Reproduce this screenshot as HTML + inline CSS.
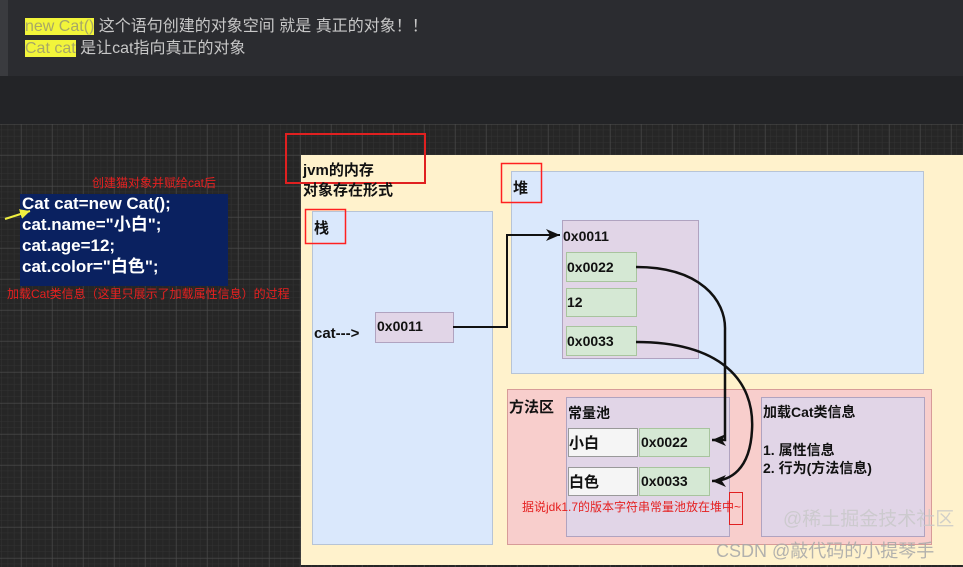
<!DOCTYPE html>
<html><head><meta charset="utf-8"><style>
body{margin:0;width:963px;height:567px;overflow:hidden;background:#232427;font-family:"Liberation Sans","Noto Sans CJK SC",sans-serif}
.top{position:absolute;left:0;top:0;width:963px;height:76px;background:#2b2c30}
.bar{position:absolute;left:0;top:0;width:8px;height:76px;background:#3a3b3f}
.t{position:absolute;left:25px;color:#c8c8c8;font-size:16px;line-height:23px}
.hl{background:#f2f53a;color:#a8a866}
</style></head><body>
<div class="top"><div class="bar"></div>
<div class="t" style="top:15px"><span class="hl">new Cat()</span> 这个语句创建的对象空间 就是 真正的对象！！</div>
<div class="t" style="top:37px"><span class="hl">Cat cat</span> 是让cat指向真正的对象</div>
</div>
<svg style="position:absolute;left:0;top:0" width="963" height="567" font-family="Liberation Sans, Noto Sans CJK SC, sans-serif">
<defs>
<pattern id="mi" width="6.2" height="6.2" patternUnits="userSpaceOnUse" x="2" y="124"><path d="M6.2 0V6.2M0 6.2H6.2" stroke="#333" stroke-width="1" fill="none"/></pattern>
<pattern id="ma" width="31" height="31" patternUnits="userSpaceOnUse" x="21" y="124"><path d="M0 0V31M0 0H31" stroke="#4e4e4e" stroke-width="1" fill="none"/></pattern>
<marker id="ar" markerUnits="userSpaceOnUse" markerWidth="16" markerHeight="14" refX="14" refY="7" orient="auto"><path d="M0 1L14 7L0 13L4 7Z" fill="#111"/></marker>
<marker id="ay" markerUnits="userSpaceOnUse" markerWidth="12" markerHeight="10" refX="10" refY="5" orient="auto"><path d="M0 0L10 5L0 10Z" fill="#f0f040"/></marker>
</defs>
<rect x="0" y="124" width="963" height="443" fill="#262626"/>
<rect x="0" y="124" width="963" height="443" fill="url(#mi)"/>
<rect x="0" y="124" width="963" height="443" fill="url(#ma)"/>
<rect x="20" y="194" width="208" height="92" fill="#0a2160"/>
<g fill="#fff" font-weight="bold" font-size="17">
<text x="22" y="209">Cat cat=new Cat();</text>
<text x="22" y="230">cat.name="小白";</text>
<text x="22" y="251">cat.age=12;</text>
<text x="22" y="272">cat.color="白色";</text>
</g>
<path d="M5 219L30 211" stroke="#f0f040" stroke-width="2" marker-end="url(#ay)"/>
<text x="92" y="187" font-size="12" fill="#e52020">创建猫对象并赋给cat后</text>
<text x="7" y="298" font-size="12" fill="#e52020">加载Cat类信息（这里只展示了加载属性信息）的过程</text>
<rect x="301" y="155" width="662" height="410" fill="#fff2cc"/>
<rect x="286" y="134" width="139" height="49" fill="none" stroke="#e02020" stroke-width="2"/>
<text x="303" y="175" font-size="15" font-weight="bold" fill="#111">jvm的内存</text>
<text x="303" y="195" font-size="15" font-weight="bold" fill="#111">对象存在形式</text>
<rect x="312.5" y="211.5" width="180" height="333" fill="#dae8fc" stroke="#b7c4d6"/>
<rect x="305.5" y="209.5" width="40" height="34" fill="none" stroke="#ff2020" stroke-width="1.5"/>
<text x="314" y="233" font-size="15" font-weight="bold" fill="#111">栈</text>
<text x="314" y="338" font-size="15" font-weight="bold" fill="#111">cat---&gt;</text>
<rect x="375.5" y="312.5" width="78" height="30" fill="#e1d5e7" stroke="#b0a3c0"/>
<text x="377" y="331" font-size="14" font-weight="bold" fill="#111">0x0011</text>
<rect x="511.5" y="171.5" width="412" height="202" fill="#dae8fc" stroke="#b7c4d6"/>
<rect x="501.5" y="163.5" width="40" height="39" fill="none" stroke="#ff2020" stroke-width="1.5"/>
<text x="513" y="193" font-size="15" font-weight="bold" fill="#111">堆</text>
<rect x="562.5" y="220.5" width="136" height="138" fill="#e1d5e7" stroke="#b0a3c0"/>
<text x="563" y="241" font-size="14" font-weight="bold" fill="#111">0x0011</text>
<g fill="#d5e8d4" stroke="#a8c49e"><rect x="566.5" y="252.5" width="70" height="29"/><rect x="566.5" y="288.5" width="70" height="28"/><rect x="566.5" y="326.5" width="70" height="29"/></g>
<g font-size="14" font-weight="bold" fill="#111"><text x="567" y="272">0x0022</text><text x="567" y="307">12</text><text x="567" y="346">0x0033</text></g>
<path d="M453 327H507V235H560" stroke="#111" stroke-width="2" fill="none" marker-end="url(#ar)"/>
<rect x="507.5" y="389.5" width="424" height="155" fill="#f8cecc" stroke="#d79b98"/>
<text x="509" y="412" font-size="15" font-weight="bold" fill="#111">方法区</text>
<rect x="566.5" y="397.5" width="163" height="139" fill="#e1d5e7" stroke="#b0a3c0"/>
<text x="568" y="418" font-size="14" font-weight="bold" fill="#111">常量池</text>
<rect x="568.5" y="428.5" width="69" height="28" fill="#f5f5f5" stroke="#999"/>
<rect x="639.5" y="428.5" width="70" height="28" fill="#d5e8d4" stroke="#a8c49e"/>
<rect x="568.5" y="467.5" width="69" height="28" fill="#f5f5f5" stroke="#999"/>
<rect x="639.5" y="467.5" width="70" height="28" fill="#d5e8d4" stroke="#a8c49e"/>
<g font-size="15" font-weight="bold" fill="#111"><text x="569" y="448">小白</text><text x="569" y="487">白色</text></g>
<g font-size="14" font-weight="bold" fill="#111"><text x="641" y="447">0x0022</text><text x="641" y="486">0x0033</text></g>
<rect x="761.5" y="397.5" width="163" height="139" fill="#e1d5e7" stroke="#b0a3c0"/>
<g font-size="14" font-weight="bold" fill="#111"><text x="763" y="417">加载Cat类信息</text><text x="763" y="455">1. 属性信息</text><text x="763" y="473">2. 行为(方法信息)</text></g>
<path d="M636 267C700 267 726 300 725 330L725 440L712 440" stroke="#111" stroke-width="2.5" fill="none" marker-end="url(#ar)"/>
<path d="M636 342C720 342 755 380 752 430C750 470 730 481 712 481" stroke="#111" stroke-width="2.5" fill="none" marker-end="url(#ar)"/>
<text x="522" y="511" font-size="12" fill="#e52020">据说jdk1.7的版本字符串常量池放在堆中~</text>
<rect x="729.5" y="492.5" width="13" height="32" fill="none" stroke="#e02020"/>
<text x="783" y="525" font-size="19" fill="#c8c8c8" opacity="0.8">@稀土掘金技术社区</text>
<text x="716" y="557" font-size="18" fill="#aaa" opacity="0.9">CSDN @敲代码的小提琴手</text>
</svg>
</body></html>
